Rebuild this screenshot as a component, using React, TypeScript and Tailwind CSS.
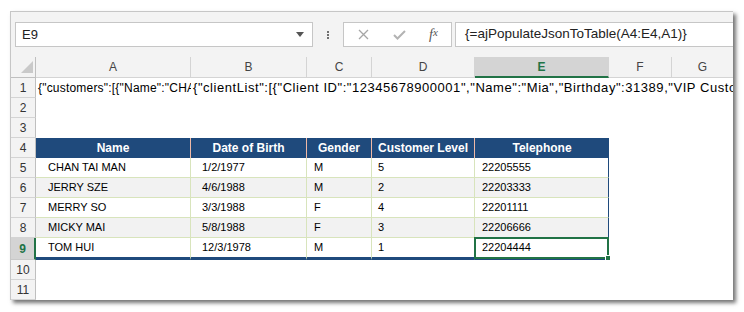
const COLS = "grid grid-cols-[25px_155px_116px_65px_103px_134px_63px_62px]";

const people = [
  ["CHAN TAI MAN", "1/2/1977", "M", "5", "22205555"],
  ["JERRY SZE", "4/6/1988", "M", "2", "22203333"],
  ["MERRY SO", "3/3/1988", "F", "4", "22201111"],
  ["MICKY MAI", "5/8/1988", "F", "3", "22206666"],
  ["TOM HUI", "12/3/1978", "M", "1", "22204444"],
];

const pads = ["pl-[12px]", "pl-[11px]", "pl-[7px]", "pl-[6px]", "pl-[7px]"];

function RowHead({ n, active = false }: { n: number; active?: boolean }) {
  return (
    <div
      className={
        active
          ? "flex items-center justify-center border-r-2 border-r-[#217346] border-b border-b-[#c8c8c8] bg-[#d4d4d4] text-[12px] font-bold text-[#217346]"
          : "flex items-center justify-center border-r border-r-[#bfbfbf] border-b border-b-[#d4d4d4] bg-[#f3f3f3] text-[12px] text-[#333]"
      }
    >
      {n}
    </div>
  );
}

function EmptyRow({ n, children }: { n: number; children?: React.ReactNode }) {
  return (
    <div className={`${COLS} h-[20px]`}>
      <RowHead n={n} />
      {children}
    </div>
  );
}

export default function App() {
  return (
    <div className="w-[744px] h-[312px] bg-white pl-[10px] pt-[11px] font-['Liberation_Sans',Arial,sans-serif]">
      <div className="w-[723px] h-[289px] flex flex-col overflow-hidden border-t border-l border-[#c6c6c6] bg-white shadow-[3px_3px_4px_rgba(0,0,0,0.55)]">
        {/* formula bar */}
        <div className="h-[45px] shrink-0 flex items-start pt-[10px] pl-[4px] bg-[#f3f3f3]">
          <div className="w-[298px] h-[25px] flex items-center justify-between border border-[#c6c6c6] bg-white pl-[6px] pr-[8px] text-[13px] text-[#222]">
            <span>E9</span>
            <svg width="8" height="5" viewBox="0 0 8 5">
              <polygon points="0,0 8,0 4,5" fill="#555" />
            </svg>
          </div>
          <div className="w-[30px] h-[25px] flex flex-col items-center justify-center gap-[1px]">
            <span className="w-[2px] h-[2px] bg-[#707070]" />
            <span className="w-[2px] h-[2px] bg-[#707070]" />
            <span className="w-[2px] h-[2px] bg-[#707070]" />
          </div>
          <div className="w-[109px] h-[25px] flex items-center border border-[#c6c6c6] bg-white">
            <div className="w-[38px] flex justify-center">
              <svg width="11" height="11" viewBox="0 0 11 11">
                <path d="M1 1L10 10M10 1L1 10" stroke="#a6a6a6" strokeWidth="1.3" />
              </svg>
            </div>
            <div className="w-[34px] flex justify-center">
              <svg width="13" height="10" viewBox="0 0 13 10">
                <path d="M1 5L4.5 8.5L12 1" stroke="#b3b3b3" strokeWidth="2" fill="none" />
              </svg>
            </div>
            <div className="w-[35px] flex justify-center font-['Liberation_Serif',serif] italic text-[14px] text-[#555]">
              f<span className="text-[11px]">x</span>
            </div>
          </div>
          <div className="ml-[3px] flex-1 h-[25px] flex items-center border-y border-l border-[#c6c6c6] bg-white pl-[9px] text-[13.5px] text-[#222] whitespace-nowrap">
            {"{=ajPopulateJsonToTable(A4:E4,A1)}"}
          </div>
        </div>

        {/* column headers */}
        <div className={`${COLS} h-[21px] shrink-0 bg-[#f3f3f3] text-[12px] text-[#444]`}>
          <div className="relative border-r border-b border-[#bfbfbf]">
            <svg className="absolute inset-0" width="25" height="20" viewBox="0 0 25 20">
              <polygon points="22,4 22,16 10,16" fill="#c9c9c9" />
            </svg>
          </div>
          {["A", "B", "C", "D"].map((c) => (
            <div key={c} className="flex items-center justify-center border-r border-b border-[#d4d4d4]">
              {c}
            </div>
          ))}
          <div className="flex items-center justify-center border-r border-r-[#d4d4d4] border-b-2 border-b-[#217346] bg-[#d4d4d4] font-bold text-[#217346]">
            E
          </div>
          {["F", "G"].map((c) => (
            <div key={c} className="flex items-center justify-center border-r border-b border-[#d4d4d4]">
              {c}
            </div>
          ))}
        </div>

        {/* row 1 */}
        <EmptyRow n={1}>
          <div className="overflow-hidden whitespace-nowrap pl-[2px] text-[12px] tracking-[0.2px] leading-[20px] text-black">
            {'{"customers":[{"Name":"CHA'}
          </div>
          <div className="col-span-6 overflow-hidden whitespace-nowrap pl-[2px] text-[13px] tracking-[0.55px] leading-[20px] text-black">
            {'{"clientList":[{"Client ID":"12345678900001","Name":"Mia","Birthday":31389,"VIP Customer":true}]}'}
          </div>
        </EmptyRow>
        <EmptyRow n={2} />
        <EmptyRow n={3} />

        {/* table header */}
        <div className={`${COLS} h-[20px]`}>
          <RowHead n={4} />
          {["Name", "Date of Birth", "Gender", "Customer Level", "Telephone"].map((h, i) => (
            <div
              key={h}
              className={`flex items-center justify-center bg-[#1f4a7c] text-[12px] font-bold text-white whitespace-nowrap ${
                i < 4 ? "border-r border-[#f0b9a6]" : ""
              }`}
            >
              {h}
            </div>
          ))}
        </div>

        {/* table body */}
        {people.map((p, r) => {
          const last = r === people.length - 1;
          return (
            <div key={p[0]} className={`${COLS} ${last ? "h-[22px]" : "h-[20px]"}`}>
              <RowHead n={r + 5} active={last} />
              {p.map((v, i) => (
                <div
                  key={i}
                  className={`relative flex items-center text-[11px] text-black ${pads[i]} ${
                    r % 2 === 1 ? "bg-[#f2f2f2]" : "bg-white"
                  } ${i < 4 ? "border-r border-r-[#d8e4bc]" : "border-r border-r-[#1f4a7c]"} ${
                    last ? "border-b-[3px] border-b-[#1f4a7c]" : "border-b border-b-[#d8e4bc]"
                  }`}
                >
                  {v}
                  {last && i === 4 && (
                    <>
                      <div className="absolute left-[-1px] top-[-1px] right-[-1px] bottom-[-2px] border-2 border-[#217346]" />
                      <div className="absolute right-[-3px] bottom-[-4px] w-[6px] h-[6px] bg-[#217346] border border-white" />
                    </>
                  )}
                </div>
              ))}
              <div />
              <div />
            </div>
          );
        })}

        <EmptyRow n={10} />
        <EmptyRow n={11} />
      </div>
    </div>
  );
}
